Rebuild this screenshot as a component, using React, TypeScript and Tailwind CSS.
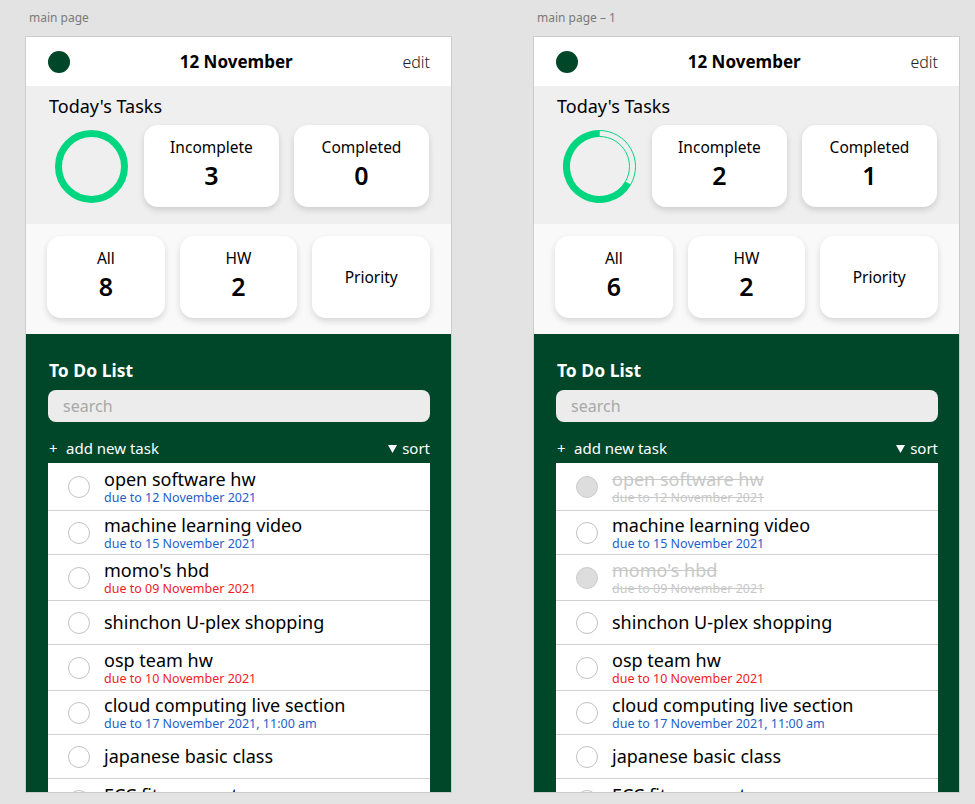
import React from "react";

type Task = {
  title: string;
  due?: string;
  color?: "blue" | "red";
  h: string;
  done?: boolean;
  top?: boolean;
};

const baseTasks: Task[] = [
  { title: "open software hw", due: "due to 12 November 2021", color: "blue", h: "h-[48px]" },
  { title: "machine learning video", due: "due to 15 November 2021", color: "blue", h: "h-[44px]" },
  { title: "momo's hbd", due: "due to 09 November 2021", color: "red", h: "h-[46px]" },
  { title: "shinchon U-plex shopping", h: "h-[44px]" },
  { title: "osp team hw", due: "due to 10 November 2021", color: "red", h: "h-[46px]" },
  { title: "cloud computing live section", due: "due to 17 November 2021, 11:00 am", color: "blue", h: "h-[44px]" },
  { title: "japanese basic class", h: "h-[44px]" },
  { title: "ECC fitness center", h: "h-[44px]", top: true },
];

function Ring({ partial }: { partial: boolean }) {
  const cx = 36.5;
  const cy = 36.5;
  const r = 33;
  const c = 2 * Math.PI * r;
  if (!partial) {
    return (
      <svg width="73" height="73" viewBox="0 0 73 73">
        <circle cx={cx} cy={cy} r={r} fill="none" stroke="#00d680" strokeWidth="7" />
      </svg>
    );
  }
  const ro = 36;
  const ri = 30;
  const a = (120 * Math.PI) / 180;
  return (
    <svg width="73" height="73" viewBox="0 0 73 73">
      <circle
        cx={cx}
        cy={cy}
        r={r}
        fill="none"
        stroke="#00d680"
        strokeWidth="7"
        strokeDasharray={`${(c * 2) / 3} ${c}`}
        transform={`rotate(30 ${cx} ${cy})`}
      />
      <path
        d={`M ${cx} ${cy - ro} A ${ro} ${ro} 0 0 1 ${cx + ro * Math.sin(a)} ${cy - ro * Math.cos(a)}`}
        fill="none"
        stroke="#00d680"
        strokeWidth="1"
      />
      <path
        d={`M ${cx} ${cy - ri} A ${ri} ${ri} 0 0 1 ${cx + ri * Math.sin(a)} ${cy - ri * Math.cos(a)}`}
        fill="none"
        stroke="#00d680"
        strokeWidth="1"
      />
    </svg>
  );
}

function StatCard({ label, value, wide }: { label: string; value?: string; wide?: boolean }) {
  return (
    <div
      className={`flex h-[82px] flex-col items-center rounded-[14px] bg-white shadow-[0_3px_6px_rgba(0,0,0,0.14)] ${
        wide ? "w-[135px]" : ""
      } ${value !== undefined ? "justify-start pt-[13px]" : "justify-center"}`}
    >
      <div className="text-[15.5px] leading-[18px] text-black">{label}</div>
      {value !== undefined && (
        <div className="mt-[5px] text-[25px] font-semibold leading-[28px] text-black">{value}</div>
      )}
    </div>
  );
}

function TaskRow({ t, last }: { t: Task; last: boolean }) {
  return (
    <div
      className={`flex ${t.h} items-center ${last ? "" : "border-b border-[#d2d2d2]"} bg-white pl-[20px]`}
    >
      <div
        className={`h-[22px] w-[22px] shrink-0 rounded-full border ${
          t.done ? "border-[#cccccc] bg-[#dddddd]" : "border-[#c2c2c2] bg-white"
        }`}
      />
      <div className={`ml-[14px] flex flex-col ${t.top ? "self-start pt-[6px]" : ""}`}>
        <div
          className={`text-[18px] leading-[21px] ${
            t.done ? "text-[#c8c8c8] line-through decoration-[#c8c8c8]" : "text-black"
          }`}
        >
          {t.title}
        </div>
        {t.due && (
          <div
            className={`text-[12.5px] leading-[15px] ${
              t.done
                ? "text-[#c8c8c8] line-through decoration-[#c8c8c8]"
                : t.color === "red"
                ? "text-[#ee1c25]"
                : "text-[#1d5fc9]"
            }`}
          >
            {t.due}
          </div>
        )}
      </div>
    </div>
  );
}

function Frame({
  label,
  incomplete,
  completed,
  all,
  hw,
  partial,
  doneIdx,
}: {
  label: string;
  incomplete: string;
  completed: string;
  all: string;
  hw: string;
  partial: boolean;
  doneIdx: number[];
}) {
  const tasks = baseTasks.map((t, i) => ({ ...t, done: doneIdx.includes(i) }));
  return (
    <div className="flex flex-col">
      <div className="mt-[11px] mb-[11px] pl-[4px] text-[12px] leading-[14px] text-[#7a7a7a]">{label}</div>
      <div className="flex h-[757px] w-[427px] flex-col overflow-hidden border border-[#c9cdcc] bg-white">
        {/* header */}
        <div className="flex h-[49px] shrink-0 items-center bg-white pl-[22px] pr-[21px]">
          <div className="h-[22px] w-[22px] rounded-full bg-[#00472a]" />
          <div className="flex-1 text-center text-[17px] font-bold leading-[24px] text-black">12 November</div>
          <div className="text-[16px] font-light leading-[24px] text-[#222]">edit</div>
        </div>
        {/* today's tasks */}
        <div className="flex h-[138px] shrink-0 flex-col bg-[#efefef] px-[23px] pt-[8px]">
          <div className="text-[18px] leading-[24px] text-black">Today's Tasks</div>
          <div className="mt-[7px] flex items-center">
            <div className="ml-[6px] mr-[16px] flex h-[73px] w-[73px] items-center justify-center">
              <Ring partial={partial} />
            </div>
            <div className="flex gap-[15px]">
              <StatCard label="Incomplete" value={incomplete} wide />
              <StatCard label="Completed" value={completed} wide />
            </div>
          </div>
        </div>
        {/* filters */}
        <div className="grid h-[110px] shrink-0 grid-cols-3 gap-[15px] bg-[#f9f9f9] px-[21px] pt-[12px]">
          <StatCard label="All" value={all} />
          <StatCard label="HW" value={hw} />
          <StatCard label="Priority" />
        </div>
        {/* to do list */}
        <div className="flex flex-1 flex-col bg-[#00472a] pl-[22px] pr-[21px] pt-[24px]">
          <div className="pl-[1px] text-[17.5px] font-bold leading-[24px] text-white">To Do List</div>
          <div className="mt-[8px] flex h-[32px] items-center rounded-[8px] bg-[#ececec] pl-[15px] text-[16px] text-[#a8a8a8]">
            search
          </div>
          <div className="mt-[16px] flex h-[20px] items-center justify-between text-[15px] leading-[20px] text-white">
            <div className="flex items-center pl-[1px]">
              <span className="w-[17px]">+</span>
              <span>add new task</span>
            </div>
            <div className="flex items-center">
              <svg width="9" height="8" viewBox="0 0 9 8" className="mr-[5px] mt-[2px]">
                <path d="M0 0 H9 L4.5 8 Z" fill="#ffffff" />
              </svg>
              <span>sort</span>
            </div>
          </div>
          <div className="mt-[5px] flex flex-col">
            {tasks.map((t, i) => (
              <TaskRow key={i} t={t} last={i === tasks.length - 1} />
            ))}
          </div>
        </div>
      </div>
    </div>
  );
}

export default function App() {
  return (
    <div
      className="flex h-[804px] w-[975px] gap-[81px] overflow-hidden bg-[#e3e3e3] pl-[25px]"
      style={{ fontFamily: '"Noto Sans", "Noto Sans CJK KR", sans-serif' }}
    >
      <Frame label="main page" incomplete="3" completed="0" all="8" hw="2" partial={false} doneIdx={[]} />
      <Frame label="main page – 1" incomplete="2" completed="1" all="6" hw="2" partial={true} doneIdx={[0, 2]} />
    </div>
  );
}
